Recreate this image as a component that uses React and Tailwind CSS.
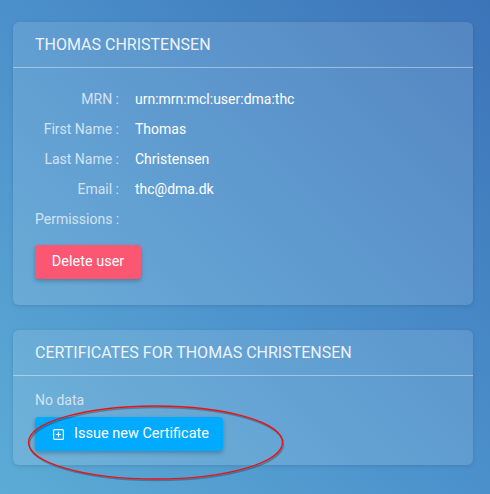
import React from "react";

const rows = [
  ["MRN :", "urn:mrn:mcl:user:dma:thc"],
  ["First Name :", "Thomas"],
  ["Last Name :", "Christensen"],
  ["Email :", "thc@dma.dk"],
  ["Permissions :", ""],
];

export default function App() {
  return (
    <div
      className="relative w-[490px] h-[494px] overflow-hidden bg-[linear-gradient(45deg,#5cabd5_0%,#4b90cb_50%,#3c74b8_100%)] pt-[22px] px-[13px] text-[14px]"
      style={{ fontFamily: "Roboto, 'Liberation Sans', sans-serif" }}
    >
      <div className="w-[460px] rounded-[6px] bg-white/[0.12] shadow-[0_1px_4px_rgba(0,0,0,0.12)]">
        <div className="h-[46px] border-b border-white/40 pl-[22px] pt-[13px] text-[16px] leading-[20px] text-[#edf3f9]">
          THOMAS CHRISTENSEN
        </div>
        <div className="px-[22px] pt-[21px] pb-[26px]">
          <div className="grid grid-cols-[84px_1fr] gap-x-[16px]">
            {rows.map(([l, v]) => (
              <React.Fragment key={l}>
                <div className="h-[30px] whitespace-nowrap text-right leading-[20px] text-[#d3e3f2]">{l}</div>
                <div className="h-[30px] leading-[20px] text-white">{v}</div>
              </React.Fragment>
            ))}
          </div>
          <button className="mt-[6px] h-[34px] w-[106px] rounded-[4px] bg-[#fb5672] text-[14.5px] text-white shadow-[0_2px_4px_rgba(0,0,0,0.25)]">
            Delete user
          </button>
        </div>
      </div>

      <div className="mt-[25px] w-[460px] rounded-[6px] bg-white/[0.12] shadow-[0_1px_4px_rgba(0,0,0,0.12)]">
        <div className="h-[46px] border-b border-white/40 pl-[22px] pt-[13px] text-[16px] leading-[20px] text-[#edf3f9]">
          CERTIFICATES FOR THOMAS CHRISTENSEN
        </div>
        <div className="px-[22px] pt-[14px] pb-[14px]">
          <div className="leading-[20px] text-[#d3e3f2]">No data</div>
          <button className="mt-[7px] flex h-[34px] w-[188px] items-center gap-[10px] rounded-[4px] bg-[#00aaff] pl-[18px] text-[14.5px] text-white shadow-[0_2px_4px_rgba(0,0,0,0.25)]">
            <svg width="11" height="11" viewBox="0 0 11 11" fill="none" stroke="white" strokeWidth="1.2">
              <rect x="0.6" y="0.6" width="9.8" height="9.8" rx="1" />
              <path d="M5.5 2.8v5.4M2.8 5.5h5.4" />
            </svg>
            Issue new Certificate
          </button>
        </div>
      </div>

      <svg className="pointer-events-none absolute left-0 top-0" width="490" height="494">
        <ellipse cx="155.5" cy="442.5" rx="127" ry="36.5" fill="none" stroke="rgba(0,0,0,0.25)" strokeWidth="1.5" transform="translate(1 1.5)" />
        <ellipse cx="155.5" cy="442.5" rx="127" ry="36.5" fill="none" stroke="#ee1111" strokeWidth="1.3" />
      </svg>
    </div>
  );
}
